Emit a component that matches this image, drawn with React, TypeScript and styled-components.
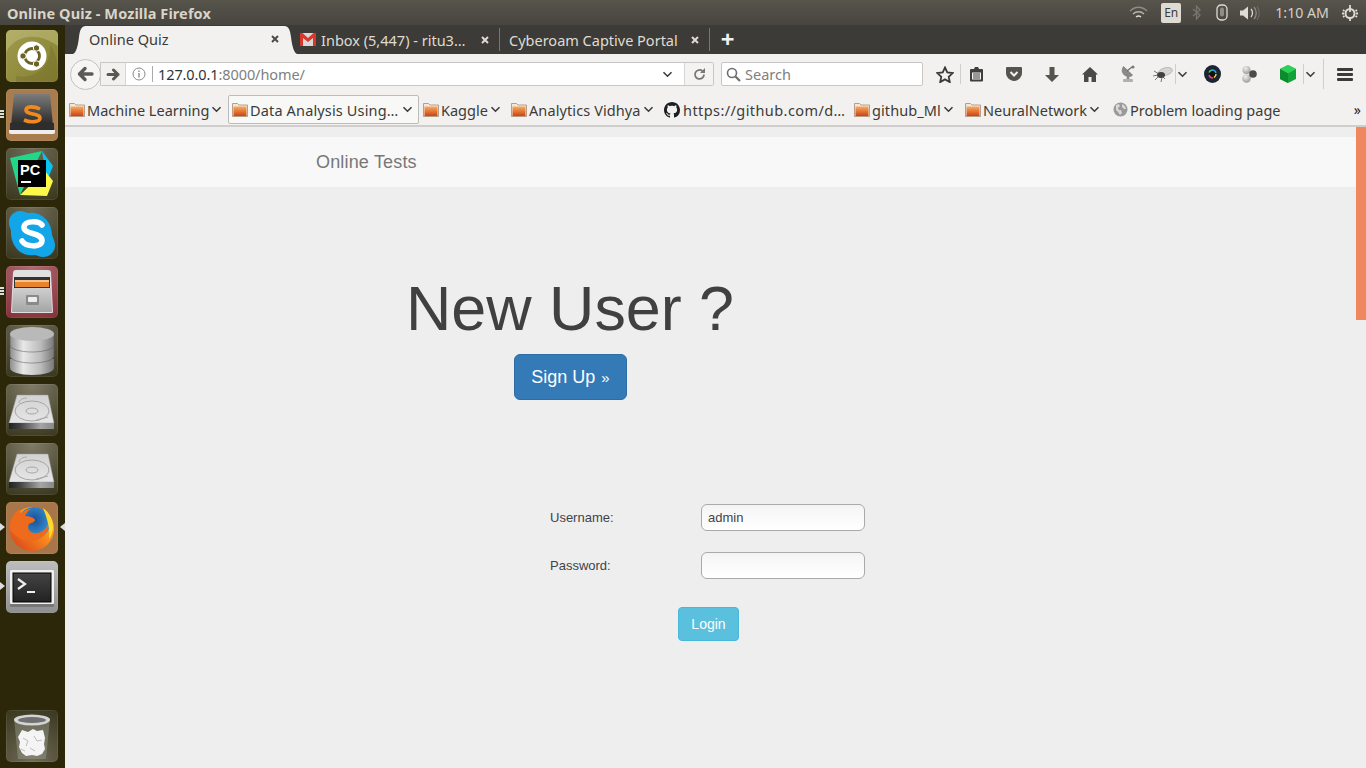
import React from "react";
import styled, { createGlobalStyle } from "styled-components";

const Global = createGlobalStyle`
  html, body { margin: 0; padding: 0; height: 100%; overflow: hidden; }
  body { font-family: "Noto Sans", "Liberation Sans", sans-serif; background: #eee; }
  #root { height: 100%; }
  * { box-sizing: border-box; }
`;

const Screen = styled.div`
  width: 1366px; height: 768px; display: flex; flex-direction: column; overflow: hidden;
`;
const TopBar = styled.div`
  height: 25px; flex: none; display: flex; align-items: center; padding: 0 8px 0 7px;
  background: linear-gradient(#57544c, #47453f);
  color: #dfdbd2;
`;
const WindowTitle = styled.div`
  font-size: 14.5px; font-weight: 700; flex: 1; letter-spacing: 0.1px; color: #d8d4ca;
`;
const Tray = styled.div`display: flex; align-items: center;`;
const LangBadge = styled.div`
  width: 20px; height: 20px; border-radius: 2px; background: #dfdbd2; color: #3c3b37;
  font-size: 12px; display: flex; align-items: center; justify-content: center; margin: 0 11px 0 13px;
`;
const TrayGap = styled.span<{ $w: number }>`width: ${p => p.$w}px; flex: none;`;
const Clock = styled.div`font-size: 14.2px; color: #d5d1c7; margin: 0 13px 0 15px;`;
const Main = styled.div`flex: 1; display: flex; min-height: 0;`;
const Launcher = styled.div`
  width: 65px; flex: none; background: #2b2708; display: flex; flex-direction: column;
  padding: 5px 0 6px 6px; gap: 7px; position: relative;
`;
const Spacer = styled.div`flex: 1;`;
const Tile = styled.div<{ $bg: string }>`
  width: 52px; height: 52px; border-radius: 5px; background: ${p => p.$bg};
  display: flex; align-items: center; justify-content: center; position: relative;
  box-shadow: inset 0 0 0 1px rgba(255,255,255,.08);
`;
const Pips = styled.div`
  position: absolute; left: -6px; top: 21px; display: flex; flex-direction: column; gap: 1px;
  & > i { display: block; width: 4px; height: 2px; background: #ddd; }
`;
const ArrowLeft = styled.div`
  position: absolute; left: -6px; top: 21px; width: 0; height: 0;
  border-left: 5px solid #ddd; border-top: 4px solid transparent; border-bottom: 4px solid transparent;
`;
const ArrowRight = styled.div`
  position: absolute; right: -7px; top: 21px; width: 0; height: 0;
  border-right: 5px solid #ddd; border-top: 4px solid transparent; border-bottom: 4px solid transparent;
`;
const Browser = styled.div`flex: 1; min-width: 0; display: flex; flex-direction: column;`;
const TabStrip = styled.div`
  height: 29px; flex: none; background: #3c3b37; display: flex; align-items: flex-end; padding-left: 20px;
`;
const ActiveTab = styled.div`
  width: 200px; height: 28px; background: #f2f1f0; display: flex; align-items: center;
  padding: 0 6px 2px 4px; font-size: 14.5px; color: #3c3b37; position: relative;
`;
const FlareSlot = styled.div<{ $side: "left" | "right" }>`
  position: absolute; bottom: 0; width: 13px; height: 28px; ${p => p.$side}: -12px; line-height: 0;
  ${p => p.$side === "left" ? "transform: scaleX(-1);" : ""}
`;
const Tab = styled.div<{ $w: number; $pl: number }>`
  width: ${p => p.$w}px; height: 23px; margin-bottom: 3px; display: flex; align-items: center; font-size: 14.5px; color: #dfdbd2;
  padding: 0 10px 0 ${p => p.$pl}px; gap: 5px; border-right: 1px solid #77766f;
`;
const TabLabel = styled.span`flex: 1; white-space: nowrap; overflow: hidden;`;
const NewTab = styled.div`
  width: 36px; height: 28px; display: flex; align-items: center; justify-content: center;
  color: #f2f1f0; font-size: 24px; font-weight: 700; padding: 0 1px 2px 0; line-height: 1;
`;
const NavBar = styled.div`
  height: 38px; flex: none; background: #f2f1f0; display: flex; align-items: center; padding: 2px 0 0 5px;
`;
const BackCircle = styled.div`
  width: 31px; height: 31px; border-radius: 50%; border: 1px solid #c4c3c1; background: #f6f5f4;
  display: flex; align-items: center; justify-content: center; flex: none; z-index: 1;
`;
const UrlBar = styled.div`
  width: 614px; height: 24px; margin-left: -1px; background: #fff; border: 1px solid #c8c7c5; border-radius: 0 2px 2px 0;
  display: flex; align-items: center; font-size: 14.5px; color: #333;
`;
const Forward = styled.div`
  width: 25px; height: 22px; display: flex; align-items: center; justify-content: center;
  border-right: 1px solid #d6d5d3; background: #f2f1f0; flex: none;
`;
const InfoBox = styled.div`
  width: 27px; height: 16px; border-right: 1px solid #aaa; display: flex; align-items: center; justify-content: center; flex: none;
`;
const Url = styled.div`flex: 1; padding-left: 5px; letter-spacing: -0.1px; span { color: #808080; }`;
const UrlEnd = styled.div`
  display: flex; align-items: center; height: 100%;
  & > svg { margin-right: 11px; }
`;
const Reload = styled.div`
  width: 29px; height: 100%; background: #f4f3f2; border-left: 1px solid #d6d5d3; display: flex; align-items: center; justify-content: center;
`;
const SearchBox = styled.div`
  width: 202px; height: 24px; margin-left: 7px; background: #fff; border: 1px solid #c8c7c5; border-radius: 2px;
  display: flex; align-items: center; gap: 4px; padding-left: 4px; font-size: 14.5px; color: #808080; flex: none;
`;
const ToolIcons = styled.div`
  display: flex; align-items: center; height: 100%; margin-left: 12px; flex: 1;
`;
const ToolSlot = styled.div<{ $w: number; $ml?: number }>`
  width: ${p => p.$w}px; margin-left: ${p => p.$ml ?? 0}px; height: 100%; display: flex; align-items: center; justify-content: center; flex: none;
`;
const ToolSep = styled.div<{ $h?: number; $ml?: number }>`
  width: 1px; height: ${p => p.$h ?? 20}px; margin-left: ${p => p.$ml ?? 0}px; background: #cfcecc; flex: none;
`;
const BookmarkBar = styled.div`
  height: 35px; flex: none; background: #f2f1f0; border-bottom: 2px solid #cfcecc; display: flex; align-items: center;
  padding: 2px 0 0 4px; font-size: 14.5px; color: #3c3b37;
`;
const Bookmark = styled.div<{ $w: number; $open?: boolean; $ml?: number }>`
  width: ${p => p.$w}px; margin-left: ${p => p.$ml ?? 0}px; height: 29px; flex: none; display: flex; align-items: center; gap: 2px; white-space: nowrap;
  ${p => p.$open ? "border: 1px solid #bdbcba; border-radius: 2px; background: #f8f8f7; padding: 0 3px;" : ""}
`;
const BookmarkText = styled.span<{ $track?: number; $ml?: number }>`
  letter-spacing: ${p => p.$track ?? 0}px; margin-left: ${p => p.$ml ?? 0}px;
`;
const PushRight = styled.span`margin-left: auto; padding-right: 2px; line-height: 0;`;
const Overflow = styled.div`margin-left: auto; padding-right: 5px; font-size: 14px; color: #222;`;
const Viewport = styled.div`flex: 1; min-height: 0; display: flex; background: #eee;`;
const Page = styled.div`flex: 1; min-width: 0; padding-top: 10px;`;
const Scroll = styled.div`width: 10px; flex: none; background: #eeeeee; display: flex; flex-direction: column;`;
const Thumb = styled.div`height: 193px; background: #f0885f;`;
const SiteNav = styled.div`
  height: 50px; background: #f8f8f8; display: flex; align-items: center; padding-left: 251px;
  font-family: "Liberation Sans", Arial, sans-serif; font-size: 18px; letter-spacing: 0.17px; color: #777;
`;
const Hero = styled.div`
  padding: 81px 0 0 341px; font-family: "Liberation Sans", Arial, sans-serif;
`;
const HeroTitle = styled.h1`
  margin: 0; font-size: 62.8px; font-weight: 400; line-height: 80px; color: #404040; white-space: nowrap;
`;
const SignUp = styled.div`
  margin: 6px 0 0 108px; width: 113px; height: 46px; border-radius: 6px; background: #337ab7; border: 1px solid #2e6da4;
  color: #fff; font-size: 18px; display: flex; align-items: center; justify-content: center; gap: 6px;
`;
const Quote = styled.span`font-size: 15px;`;
const LoginForm = styled.div`
  margin: 104px 0 0 485px; width: 320px; font-family: "Liberation Sans", Arial, sans-serif; font-size: 13px; color: #3f4349;
  display: flex; flex-direction: column;
`;
const FieldRow = styled.div`
  display: grid; grid-template-columns: 151px 164px; align-items: center; height: 27px; margin-bottom: 21px;
`;
const FieldInput = styled.div`
  height: 27px; border-radius: 6px; border: 1px solid #aaa; background: linear-gradient(#f4f4f4, #fff);
  padding-left: 6px; font-size: 13px; display: flex; align-items: center; color: #444;
`;
const LoginBtn = styled.div`
  margin: 7px 0 0 128px; width: 61px; height: 34px; border-radius: 4px; background: #5bc0de; border: 1px solid #46b8da;
  color: #fff; font-size: 14px; display: flex; align-items: center; justify-content: center;
`;

const Flare = () => (
  <svg width="13" height="28" viewBox="0 0 13 28"><path d="M0 0C5 0 6 4 7 11c1 9 3 16 6 17H0z" fill="#f2f1f0" /></svg>
);
const CloseX = ({ c }: { c: string }) => (
  <svg width="8" height="8" viewBox="0 0 8 8"><path d="M1 1l6 6M7 1L1 7" stroke={c} strokeWidth="2" /></svg>
);
const Folder = () => (
  <svg width="16" height="15" viewBox="0 0 16 15">
    <defs><linearGradient id="fg" x1="0" y1="0" x2="0" y2="1"><stop offset="0" stopColor="#f8ab62" /><stop offset="1" stopColor="#cc4410" /></linearGradient></defs>
    <path d="M.5 1.500h5L7 3h8.500v11.500H.5z" fill="#eee8df" stroke="#a98a70" strokeWidth=".8" />
    <rect x="1.500" y="4.500" width="13" height="9.500" fill="url(#fg)" />
  </svg>
);
const Chevron = ({ c = "#3c3b37" }: { c?: string }) => (
  <svg width="11" height="7" viewBox="0 0 11 7"><path d="M1.500 1.200l4 4 4-4" fill="none" stroke={c} strokeWidth="1.600" /></svg>
);
const GitHub = () => (
  <svg width="16" height="16" viewBox="0 0 16 16"><path fill="#1b1f23" d="M8 0C3.580 0 0 3.580 0 8c0 3.540 2.290 6.530 5.470 7.590.4.070.55-.17.55-.38 0-.19-.01-.82-.01-1.490-2.010.37-2.530-.49-2.690-.94-.09-.23-.48-.94-.82-1.130-.28-.15-.68-.52-.01-.53.63-.01 1.080.58 1.230.82.720 1.210 1.870.870 2.330.660.070-.520.280-.870.510-1.070-1.780-.2-3.640-.89-3.640-3.950 0-.870.310-1.590.820-2.150-.080-.2-.360-1.020.080-2.120 0 0 .670-.210 2.200.820.640-.180 1.320-.270 2-.270s1.360.090 2 .270c1.530-1.040 2.200-.820 2.200-.820.440 1.100.160 1.920.080 2.120.510.560.820 1.270.820 2.150 0 3.070-1.870 3.750-3.650 3.950.290.250.540.730.540 1.480 0 1.070-.010 1.930-.010 2.200 0 .210.150.460.550.380A8.010 8.010 0 0 0 16 8c0-4.420-3.580-8-8-8z" /></svg>
);
const Globe = () => (
  <svg width="15" height="15" viewBox="0 0 15 15"><circle cx="7.500" cy="7.500" r="7" fill="#9a9a9a" /><path d="M3 3l3-1 1 2-2 2 1 2 2 0 1 3-2 2-2-3-2-2zM9 2l3 2 1 3-2 0-2-2z" fill="#d8d8d8" /></svg>
);
const Gmail = () => (
  <svg width="16" height="13" viewBox="0 0 16 13"><rect width="16" height="13" fill="#d9d9d9" /><path d="M0 0h2.500L8 5l5.500-5H16v13h-3V5L8 9 3 5v8H0z" fill="#d8382c" /></svg>
);

const UbuntuIcon = () => (
  <svg width="52" height="52" viewBox="0 0 52 52">
    <path d="M0 22C10 4 32 2 52 16V5a5 5 0 0 0-5-5H5a5 5 0 0 0-5 5z" fill="#c5c180" opacity=".5" />
    <path d="M10 46C30 50 46 36 44 14c6 10 8 20 8 28v5a5 5 0 0 1-5 5H10z" fill="#6f6a2a" opacity=".35" />
    <circle cx="26" cy="26" r="14.500" fill="#fff" />
    <circle cx="26" cy="26" r="7.500" fill="none" stroke="#6a6323" strokeWidth="2.800" />
    <circle cx="17" cy="26" r="3.200" fill="#6a6323" stroke="#fff" /><circle cx="30.500" cy="18" r="3.200" fill="#6a6323" stroke="#fff" /><circle cx="30.500" cy="34" r="3.200" fill="#6a6323" stroke="#fff" />
  </svg>
);
const SublimeIcon = () => (
  <svg width="52" height="52" viewBox="0 0 52 52">
    <defs><linearGradient id="sl" x1="0" y1="0" x2="0" y2="1"><stop offset="0" stopColor="#7c7c7c" /><stop offset="1" stopColor="#252525" /></linearGradient></defs>
    <path d="M8 5h36l3 32H5z" fill="url(#sl)" />
    <path d="M4 34h44v7a3 3 0 0 1-3 3H7a3 3 0 0 1-3-3z" fill="#2d2d2d" />
    <path d="M3 41h46v2a2 2 0 0 1-2 2H5a2 2 0 0 1-2-2z" fill="#eee" />
    <path d="M34 20c-6-3-14-3-14 1 0 5 14 3 14 8 0 4-9 5-16 2" fill="none" stroke="#f08a1e" strokeWidth="3.600" />
  </svg>
);
const PyCharmIcon = () => (
  <svg width="52" height="52" viewBox="0 0 52 52">
    <path d="M4 10l32-7-22 44z" fill="#21d789" />
    <path d="M36 3l11 15-6 15z" fill="#07c3f2" />
    <path d="M14 47l27 1 6-15-8-10z" fill="#fcf84a" />
    <rect x="12" y="12" width="28" height="27" fill="#000" />
    <text x="14" y="27" fontFamily="Liberation Sans" fontWeight="700" fontSize="14.500" fill="#fff">PC</text>
    <rect x="15" y="33" width="10" height="2" fill="#fff" />
  </svg>
);
const SkypeIcon = () => (
  <svg width="52" height="52" viewBox="0 0 52 52">
    <path d="M14 4c4 0 6 2 9 2 10-2 23 7 23 22 1 3 3 6 3 10 0 7-5 12-12 12-4 0-6-2-9-2C14 50 4 38 5 23c-1-2-2-4-2-8C3 9 8 4 14 4z" fill="#12a6e8" />
    <path d="M36 18c-3-4-17-5-18 2-1 8 19 5 18 14-1 7-16 6-20 0" fill="none" stroke="#fff" strokeWidth="5.500" strokeLinecap="round" />
  </svg>
);
const CabinetIcon = () => (
  <svg width="52" height="52" viewBox="0 0 52 52">
    <defs><linearGradient id="cab" x1="0" y1="0" x2="0" y2="1"><stop offset="0" stopColor="#cfcfcf" /><stop offset="1" stopColor="#a5a5a5" /></linearGradient></defs>
    <path d="M7 7a3 3 0 0 1 3-3h32a3 3 0 0 1 3 3l2 39a1 1 0 0 1-1 1H6a1 1 0 0 1-1-1z" fill="#e0e0e0" />
    <rect x="8" y="11" width="36" height="11" fill="#333" />
    <rect x="9" y="14" width="34" height="2" fill="#f9c28a" /><rect x="9" y="16" width="34" height="5" fill="#e8842e" />
    <path d="M7 22h38l1 24H6z" fill="url(#cab)" />
    <rect x="20" y="29" width="13" height="10" rx="1" fill="#8a8a8a" /><rect x="22" y="31" width="9" height="5" rx="1" fill="#eee" />
  </svg>
);
const DbIcon = () => (
  <svg width="52" height="52" viewBox="0 0 52 52">
    <defs><linearGradient id="db" x1="0" y1="0" x2="1" y2="0"><stop offset="0" stopColor="#8e8e8e" /><stop offset=".3" stopColor="#e8e8e8" /><stop offset=".7" stopColor="#bbb" /><stop offset="1" stopColor="#777" /></linearGradient></defs>
    <path d="M4 34v9c0 4 10 7 22 7s22-3 22-7v-9z" fill="url(#db)" />
    <path d="M4 21v10c0 4 10 7 22 7s22-3 22-7V21z" fill="url(#db)" stroke="#555" strokeWidth=".5" />
    <path d="M4 9v11c0 4 10 7 22 7s22-3 22-7V9z" fill="url(#db)" stroke="#555" strokeWidth=".5" />
    <ellipse cx="26" cy="9" rx="22" ry="7" fill="#b9b9b9" />
  </svg>
);
const DriveIcon = () => (
  <svg width="52" height="52" viewBox="0 0 52 52">
    <defs>
      <linearGradient id="drv" x1="0" y1="0" x2="0" y2="1"><stop offset="0" stopColor="#d2d2d2" /><stop offset="1" stopColor="#e6e6e6" /></linearGradient>
      <linearGradient id="drb" x1="0" y1="0" x2="1" y2="0"><stop offset="0" stopColor="#222" /><stop offset=".25" stopColor="#444" /><stop offset=".7" stopColor="#a5a5a5" /><stop offset="1" stopColor="#888" /></linearGradient>
    </defs>
    <path d="M11 11h31l6 28H3z" fill="url(#drv)" stroke="#999" strokeWidth=".5" />
    <rect x="3" y="39" width="45" height="6" fill="url(#drb)" />
    <ellipse cx="26" cy="27" rx="17" ry="10" fill="none" stroke="#a6a6a6" /><ellipse cx="26" cy="27" rx="6" ry="3" fill="none" stroke="#a6a6a6" />
    <path d="M13 19c0-3 4-5 8-5M42 33l-12 3" fill="none" stroke="#aaa" />
  </svg>
);
const FirefoxIcon = () => (
  <svg width="52" height="52" viewBox="0 0 52 52">
    <defs>
      <linearGradient id="ffo" x1="1" y1="0" x2="0" y2="1"><stop offset="0" stopColor="#ffd92e" /><stop offset=".45" stopColor="#f78a1e" /><stop offset="1" stopColor="#d83a1a" /></linearGradient>
      <radialGradient id="ffb" cx=".5" cy=".4" r=".6"><stop offset="0" stopColor="#1a4f9a" /><stop offset="1" stopColor="#3a9ad6" /></radialGradient>
    </defs>
    <circle cx="26" cy="27" r="22" fill="url(#ffo)" />
    <circle cx="28" cy="21" r="16" fill="url(#ffb)" />
    <path d="M4 27C3 18 8 10 14 7c0 2 0 4 1 5 2-3 6-5 10-5-3 2-5 4-6 7 3 0 9 1 10 4 0 2-4 3-6 4-2 3-1 8 5 9 7 1 13-4 14-10 1 5-1 12-7 15-6 4-14 4-20 1-6-3-10-8-11-10z" fill="#ee6a1c" />
    <path d="M37 6c6 4 10 11 10 19 0 4-2 9-4 12 1-9-1-19-6-31z" fill="#ffd92e" />
  </svg>
);
const TerminalIcon = () => (
  <svg width="52" height="52" viewBox="0 0 52 52">
    <defs><linearGradient id="trm" x1="0" y1="0" x2="0" y2="1"><stop offset="0" stopColor="#444" /><stop offset="1" stopColor="#222" /></linearGradient></defs>
    <rect x="4" y="9" width="44" height="37" rx="1" fill="#777" />
    <rect x="4" y="9" width="44" height="34" rx="1" fill="#f1f1f1" />
    <rect x="7" y="12" width="38" height="29" fill="url(#trm)" stroke="#000" />
    <path d="M12 18l7 5-7 5" fill="none" stroke="#eee" strokeWidth="2.200" /><rect x="21" y="30" width="8" height="2" fill="#eee" />
  </svg>
);
const TrashIcon = () => (
  <svg width="52" height="52" viewBox="0 0 52 52">
    <path d="M8 8l4 41h28l4-41z" fill="#a4a49c" opacity=".4" />
    <ellipse cx="26" cy="10" rx="18" ry="5.500" fill="#d4d4d4" /><ellipse cx="26" cy="10" rx="14" ry="3" fill="#707070" />
    <path d="M12 27l4-7 6 2 5-3 4 2 6-1 2 8-1 6 1 5-3 5-5 2-5-1-6 1-4-3-3-6 1-5z" fill="#f4f4f4" />
    <path d="M17 28l5 3-2 5M28 26l3 5 5-1M24 38l5 3M15 39l4 2" fill="none" stroke="#bdbdbd" />
  </svg>
);

const Wifi = () => (
  <svg width="19" height="14" viewBox="0 0 19 14" fill="none" stroke="#8f8c84" strokeWidth="1.400"><path d="M1 5c5-5 12-5 17 0" /><path d="M4 8c3-3 8-3 11 0" stroke="#b5b2aa" /><path d="M7 11c2-1.500 3-1.500 5 0" stroke="#ddd" /></svg>
);
const Bluetooth = () => (
  <svg width="9" height="15" viewBox="0 0 9 15" fill="none" stroke="#77756e" strokeWidth="1.300"><path d="M1 4l7 6-3.500 4V1L8 5l-7 6" /></svg>
);
const Mouse = () => (
  <svg width="12" height="17" viewBox="0 0 12 17" fill="none" stroke="#dfdbd2" strokeWidth="1.300"><rect x="1" y="1" width="10" height="15" rx="4" /><rect x="4" y="3.500" width="4" height="9" rx="2" fill="#8f8c84" stroke="none" /></svg>
);
const Volume = () => (
  <svg width="20" height="16" viewBox="0 0 20 16"><path d="M0 5.500h3L8 1.500v13l-5-4H0z" fill="#dfdbd2" /><path d="M11 4c2 2 2 6 0 8" fill="none" stroke="#dfdbd2" strokeWidth="1.300" /><path d="M14 2c3 3 3 9 0 12" fill="none" stroke="#8f8c84" strokeWidth="1.300" /><path d="M17 1c3 4 3 10 0 14" fill="none" stroke="#6f6d66" strokeWidth="1.100" /></svg>
);
const Power = () => (
  <svg width="16" height="16" viewBox="0 0 16 16" fill="none" stroke="#dfdbd2" strokeWidth="2"><circle cx="8" cy="8.500" r="4.500" /><path d="M8 0v7M8 14v2M1 5l1.500 1M15 5l-1.500 1M1 12l1.500-1M15 12l-1.500-1M0 8.500h2M14 8.500h2" strokeWidth="1.800" /></svg>
);

const BackArrow = () => (
  <svg width="17" height="16" viewBox="0 0 17 16" fill="none" stroke="#5a5954" strokeWidth="3.400" strokeLinecap="round" strokeLinejoin="round"><path d="M8 2.500L2.500 8 8 13.500M3 8h12" /></svg>
);
const FwdArrow = () => (
  <svg width="14" height="13" viewBox="0 0 14 13" fill="none" stroke="#5a5954" strokeWidth="3" strokeLinecap="round" strokeLinejoin="round"><path d="M7.500 2L12 6.500 7.500 11M12 6.500H2" /></svg>
);
const Info = () => (
  <svg width="14" height="14" viewBox="0 0 14 14"><circle cx="7" cy="7" r="6" fill="none" stroke="#8a8a8a" /><rect x="6.300" y="6" width="1.400" height="4.500" fill="#8a8a8a" /><rect x="6.300" y="3.500" width="1.400" height="1.500" fill="#8a8a8a" /></svg>
);
const ReloadIcon = () => (
  <svg width="13" height="13" viewBox="0 0 13 13" fill="none" stroke="#777" strokeWidth="1.800"><path d="M11 6.500a4.500 4.500 0 1 1-1.500-3.400" /><path d="M12 0v5H7z" fill="#777" stroke="none" /></svg>
);
const SearchIcon = () => (
  <svg width="15" height="15" viewBox="0 0 15 15" fill="none" stroke="#6e6e6e" strokeWidth="1.600"><circle cx="6" cy="6" r="4.500" /><path d="M9.500 9.500L14 14" strokeWidth="2.200" /></svg>
);
const Star = () => (
  <svg width="18" height="17" viewBox="0 0 18 17"><path d="M9 1.500l2.300 5 5.400.6-4 3.700 1.100 5.300L9 13.400l-4.800 2.700 1.100-5.300-4-3.700 5.400-.6z" fill="none" stroke="#3c3b37" strokeWidth="1.800" /></svg>
);
const Clipboard = () => (
  <svg width="15" height="16" viewBox="0 0 15 16"><path d="M2 3h3l1-2h3l1 2h3a1 1 0 0 1 1 1v10.500a1 1 0 0 1-1 1H2a1 1 0 0 1-1-1V4a1 1 0 0 1 1-1z" fill="#3f3e3a" /><path d="M3 6.500h9v7H3z" fill="#f2f1f0" /><path d="M4 8h7M4 10h7M4 12h7" stroke="#3f3e3a" strokeWidth="1" /></svg>
);
const Pocket = () => (
  <svg width="16" height="14" viewBox="0 0 16 14"><path d="M1 0h14a1 1 0 0 1 1 1v5c0 4-4 8-8 8S0 10 0 6V1a1 1 0 0 1 1-1z" fill="#55544f" /><path d="M4.500 5L8 8.500 11.500 5" fill="none" stroke="#f2f1f0" strokeWidth="2" /></svg>
);
const Download = () => (
  <svg width="14" height="15" viewBox="0 0 14 15"><path d="M4.500 0h5v8H14l-7 7-7-7h4.500z" fill="#55544f" /></svg>
);
const Home = () => (
  <svg width="16" height="15" viewBox="0 0 16 15"><path d="M8 0l8 7.500h-2V15H9.500v-5h-3v5H2V7.500H0z" fill="#4a4945" /></svg>
);
const Satellite = () => (
  <svg width="15" height="18" viewBox="0 0 15 18"><path d="M2.500 1.500C0 5 1 10.500 7 11.500c2 .3 3.500-.3 4.500-1.500z" fill="#8a8a8a" stroke="#666" strokeWidth=".6" /><path d="M6 6l5-4" stroke="#666" strokeWidth="1.100" /><circle cx="12" cy="2" r="1.500" fill="#777" /><path d="M6 11l-.5 3h3l-.5-3z" fill="#8a8a8a" /><rect x="2" y="14" width="10" height="3" rx="1" fill="#b0b0b0" /></svg>
);
const Bug = () => (
  <svg width="21" height="16" viewBox="0 0 21 16"><ellipse cx="13.500" cy="5.500" rx="7" ry="3.800" fill="#d4d4d4" stroke="#999" strokeWidth=".5" transform="rotate(-15 13.500 5.500)" /><ellipse cx="9" cy="9" rx="4" ry="3" fill="#3f3f3f" /><path d="M1 10l5-1M3 14l4-4M9 16l1-5M2 5l5 3M13 13l-3-3" stroke="#555" strokeWidth=".8" /></svg>
);
const Lens = () => (
  <svg width="17" height="18" viewBox="0 0 17 18"><ellipse cx="8.500" cy="9" rx="8.500" ry="9" fill="#1c2433" /><circle cx="8.500" cy="9" r="3.300" fill="#111" /><path d="M5 7.500a4 4 0 0 1 3-2.500" stroke="#3ccf5a" strokeWidth="1.500" fill="none" /><path d="M8 5a4 4 0 0 1 4 3" stroke="#2f9fe8" strokeWidth="1.500" fill="none" /><path d="M12 9a4 4 0 0 1-2 3.500" stroke="#f2d22e" strokeWidth="1.500" fill="none" /><path d="M9 13a4 4 0 0 1-4-3" stroke="#e0407a" strokeWidth="1.500" fill="none" /></svg>
);
const Balls = () => (
  <svg width="15" height="17" viewBox="0 0 15 17">
    <defs><radialGradient id="ball" cx=".4" cy=".3" r=".7"><stop offset="0" stopColor="#eee" /><stop offset="1" stopColor="#9c9c9c" /></radialGradient></defs>
    <circle cx="4.500" cy="4" r="4" fill="url(#ball)" /><circle cx="4.500" cy="12.500" r="4.300" fill="url(#ball)" /><circle cx="11" cy="8" r="3.800" fill="#4a4a4a" />
  </svg>
);
const Cube = () => (
  <svg width="16" height="18" viewBox="0 0 16 18"><path d="M8 0l8 4v10l-8 4-8-4V4z" fill="#12a338" /><path d="M8 0l8 4-8 4.500L0 4z" fill="#2ed158" /><path d="M8 8.500V18l-8-4V4z" fill="#0d8c2e" /></svg>
);
const Menu = () => (
  <svg width="16" height="13" viewBox="0 0 16 13"><rect width="16" height="3" rx="1" fill="#3c3b37" /><rect y="5" width="16" height="3" rx="1" fill="#3c3b37" /><rect y="10" width="16" height="3" rx="1" fill="#3c3b37" /></svg>
);

const darkTile = "radial-gradient(circle at 50% 0,#706c58,#39361e)";
const driveTile = "radial-gradient(circle at 50% 0,#807c68,#39361e)";

export default function App() {
  return (
    <Screen>
      <Global />
      <TopBar>
        <WindowTitle>Online Quiz - Mozilla Firefox</WindowTitle>
        <Tray>
          <Wifi />
          <LangBadge>En</LangBadge>
          <Bluetooth />
          <TrayGap $w={15} />
          <Mouse />
          <TrayGap $w={12} />
          <Volume />
          <Clock>1:10 AM</Clock>
          <Power />
        </Tray>
      </TopBar>
      <Main>
        <Launcher>
          <Tile $bg="linear-gradient(135deg,#a09a4f,#86802f)"><UbuntuIcon /></Tile>
          <Tile $bg="#a87c4c"><Pips><i /><i /><i /></Pips><SublimeIcon /></Tile>
          <Tile $bg={darkTile}><PyCharmIcon /></Tile>
          <Tile $bg={darkTile}><SkypeIcon /></Tile>
          <Tile $bg="radial-gradient(circle at 50% 0,#b06a70,#85303c)"><Pips><i /><i /><i /></Pips><CabinetIcon /></Tile>
          <Tile $bg={darkTile}><DbIcon /></Tile>
          <Tile $bg={driveTile}><DriveIcon /></Tile>
          <Tile $bg={driveTile}><DriveIcon /></Tile>
          <Tile $bg="#a87648"><ArrowLeft /><ArrowRight /><FirefoxIcon /></Tile>
          <Tile $bg="linear-gradient(#bdbdbd,#8f8f8f)"><ArrowLeft /><TerminalIcon /></Tile>
          <Spacer />
          <Tile $bg="radial-gradient(circle at 50% 100%,#706c58,#39361e)"><TrashIcon /></Tile>
        </Launcher>
        <Browser>
          <TabStrip>
            <ActiveTab>
              <FlareSlot $side="left"><Flare /></FlareSlot>
              <TabLabel>Online Quiz</TabLabel><CloseX c="#4c4b47" />
              <FlareSlot $side="right"><Flare /></FlareSlot>
            </ActiveTab>
            <Tab $w={215} $pl={15}><Gmail /><TabLabel>Inbox (5,447) - ritu3…</TabLabel><CloseX c="#dfdbd2" /></Tab>
            <Tab $w={210} $pl={9}><TabLabel>Cyberoam Captive Portal</TabLabel><CloseX c="#dfdbd2" /></Tab>
            <NewTab>+</NewTab>
          </TabStrip>
          <NavBar>
            <BackCircle><BackArrow /></BackCircle>
            <UrlBar>
              <Forward><FwdArrow /></Forward>
              <InfoBox><Info /></InfoBox>
              <Url>127.0.0.1<span>:8000/home/</span></Url>
              <UrlEnd><Chevron /><Reload><ReloadIcon /></Reload></UrlEnd>
            </UrlBar>
            <SearchBox><SearchIcon /><span>Search</span></SearchBox>
            <ToolIcons>
              <ToolSlot $w={20}><Star /></ToolSlot>
              <ToolSep $ml={5} />
              <ToolSlot $w={30}><Clipboard /></ToolSlot>
              <ToolSlot $w={38} $ml={4}><Pocket /></ToolSlot>
              <ToolSlot $w={38}><Download /></ToolSlot>
              <ToolSlot $w={38}><Home /></ToolSlot>
              <ToolSlot $w={38}><Satellite /></ToolSlot>
              <ToolSlot $w={25} $ml={3}><Bug /></ToolSlot>
              <ToolSep />
              <ToolSlot $w={13}><Chevron /></ToolSlot>
              <ToolSlot $w={46}><Lens /></ToolSlot>
              <ToolSlot $w={28}><Balls /></ToolSlot>
              <ToolSlot $w={30} $ml={10}><Cube /></ToolSlot>
              <ToolSep />
              <ToolSlot $w={13}><Chevron /></ToolSlot>
              <ToolSep $h={30} $ml={6} />
              <ToolSlot $w={42}><Menu /></ToolSlot>
            </ToolIcons>
          </NavBar>
          <BookmarkBar>
            <Bookmark $w={159}><Folder /><BookmarkText>Machine Learning</BookmarkText><Chevron /></Bookmark>
            <Bookmark $open $w={191}><Folder /><BookmarkText $track={0.15}>Data Analysis Using…</BookmarkText><PushRight><Chevron /></PushRight></Bookmark>
            <Bookmark $w={88} $ml={4}><Folder /><BookmarkText>Kaggle</BookmarkText><Chevron /></Bookmark>
            <Bookmark $w={153}><Folder /><BookmarkText $track={0.1}>Analytics Vidhya</BookmarkText><Chevron /></Bookmark>
            <Bookmark $w={190}><GitHub /><BookmarkText $track={0.42} $ml={1}>https://github.com/d…</BookmarkText></Bookmark>
            <Bookmark $w={111}><Folder /><BookmarkText $track={0.1}>github_Ml</BookmarkText><Chevron /></Bookmark>
            <Bookmark $w={148}><Folder /><BookmarkText>NeuralNetwork</BookmarkText><Chevron /></Bookmark>
            <Bookmark $w={180}><Globe /><BookmarkText>Problem loading page</BookmarkText></Bookmark>
            <Overflow>»</Overflow>
          </BookmarkBar>
          <Viewport>
            <Page>
              <SiteNav>Online Tests</SiteNav>
              <Hero>
                <HeroTitle>New User ?</HeroTitle>
                <SignUp>Sign Up<Quote>»</Quote></SignUp>
              </Hero>
              <LoginForm>
                <FieldRow><span>Username:</span><FieldInput>admin</FieldInput></FieldRow>
                <FieldRow><span>Password:</span><FieldInput /></FieldRow>
                <LoginBtn>Login</LoginBtn>
              </LoginForm>
            </Page>
            <Scroll><Thumb /></Scroll>
          </Viewport>
        </Browser>
      </Main>
    </Screen>
  );
}
